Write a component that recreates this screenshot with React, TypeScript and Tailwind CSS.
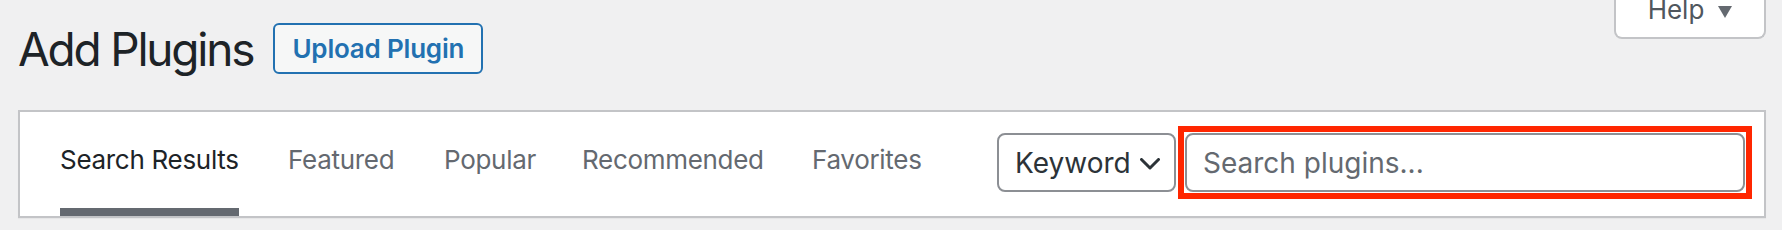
const tabs = [
  { label: "Search Results", width: "w-[228px]", active: true },
  { label: "Featured", width: "w-[156px]", active: false },
  { label: "Popular", width: "w-[138px]", active: false },
  { label: "Recommended", width: "w-[230px]", active: false },
  { label: "Favorites", width: "w-[120px]", active: false },
];

export default function App() {
  return (
    <div className="h-[230px] overflow-hidden bg-[#f0f0f1] pl-[18px] pr-[16px] font-['Inter',sans-serif]">
      {/* header */}
      <div className="flex items-start justify-between">
        <div className="flex items-center gap-[20px] pt-[23px]">
          <h1 className="whitespace-nowrap text-[46px] leading-[46px] font-normal text-[#1d2327] tracking-[-2.2px]">
            Add Plugins
          </h1>
          <button className="flex h-[51px] w-[210px] items-center justify-center rounded-[6px] border-2 border-[#2271b1] bg-[#f6f7f7] text-[26px] leading-[26px] font-semibold tracking-[-0.2px] text-[#2271b1]">
            Upload Plugin
          </button>
        </div>
        <button className="flex h-[39px] w-[152px] items-end justify-center gap-[14px] rounded-b-[8px] border-2 border-t-0 border-[#c3c4c7] bg-white pb-[14px] text-[26px] leading-[26px] text-[#50575e]">
          <span>Help</span>
          <span className="mb-[5px] h-0 w-0 border-x-[7px] border-t-[12px] border-x-transparent border-t-[#646970]" />
        </button>
      </div>

      {/* filter bar */}
      <div className="mt-[36px] flex h-[108px] items-start justify-between border-2 border-[#c3c4c7] bg-white pl-[40px] pr-[12px] shadow-[0_1px_1px_rgba(0,0,0,0.04)]">
        <ul className="flex">
          {tabs.map((t) => (
            <li key={t.label} className={t.width}>
              <a
                className={`block whitespace-nowrap pt-[35px] pb-[35px] text-[26px] leading-[26px] tracking-[-0.3px] border-b-[8px] ${
                  t.active
                    ? "w-[179px] border-[#646970] text-[#1d2327]"
                    : "w-fit border-transparent text-[#646970]"
                }`}
              >
                {t.label}
              </a>
            </li>
          ))}
        </ul>

        <div className="flex items-center gap-[2px] pt-[14px]">
          <div className="flex h-[59px] w-[179px] items-center justify-between rounded-[8px] border-2 border-[#8c8f94] bg-white pl-[16px] pr-[14px] text-[28px] leading-[28px] text-[#2c3338]">
            <span>Keyword</span>
            <svg width="20" height="12" viewBox="0 0 20 12" fill="none" className="mt-[2px]">
              <polyline
                points="1.5,1.5 10,10 18.5,1.5"
                stroke="#2c3338"
                strokeWidth="3"
                strokeLinecap="round"
                strokeLinejoin="round"
              />
            </svg>
          </div>
          <div className="h-[73px] w-[574px] border-[6px] border-[#ff2600] p-px">
            <input
              className="h-full w-full rounded-[8px] border-2 border-[#8c8f94] bg-white px-[16px] text-[28px] text-[#2c3338] outline-none placeholder:text-[#646970]"
              placeholder="Search plugins..."
            />
          </div>
        </div>
      </div>
    </div>
  );
}
